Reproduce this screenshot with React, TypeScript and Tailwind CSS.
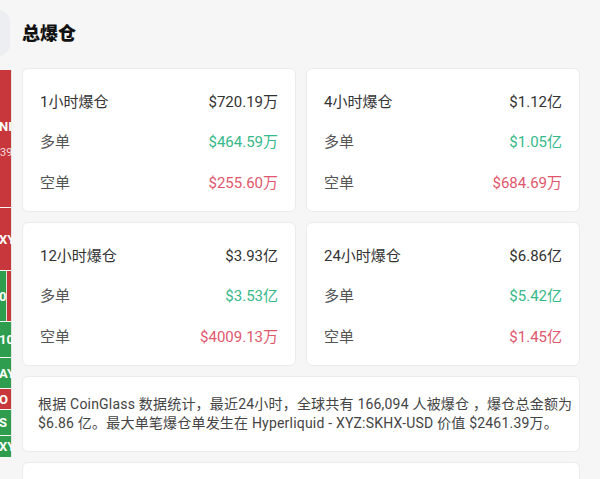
import React from "react";

const FONT = 'Roboto, "Noto Sans CJK SC", "Noto Sans", sans-serif';

interface IStat {
  title: string;
  total: string;
  long: string;
  short: string;
}

const stats: IStat[] = [
  { title: "1小时爆仓", total: "$720.19万", long: "$464.59万", short: "$255.60万" },
  { title: "4小时爆仓", total: "$1.12亿", long: "$1.05亿", short: "$684.69万" },
  { title: "12小时爆仓", total: "$3.93亿", long: "$3.53亿", short: "$4009.13万" },
  { title: "24小时爆仓", total: "$6.86亿", long: "$5.42亿", short: "$1.45亿" },
];

// right edge of the heatmap that sits beside the panel
const heatCells = [
  { h: "h-[137px]", color: "bg-[#c7373b]", text: "NI", sub: "39" },
  { h: "h-[62px]", color: "bg-[#c7373b]", text: "XY", sub: "" },
  { h: "h-[50px]", color: "bg-[#2f9d4e]", text: "0", sub: "", split: true },
  { h: "h-[35px]", color: "bg-[#2f9d4e]", text: "10", sub: "" },
  { h: "h-[30px]", color: "bg-[#2f9d4e]", text: "AY", sub: "" },
  { h: "h-[20px]", color: "bg-[#c7373b]", text: "O", sub: "" },
  { h: "h-[25px]", color: "bg-[#2f9d4e]", text: "S", sub: "" },
  { h: "h-[21px]", color: "bg-[#2f9d4e]", text: "XY", sub: "" },
];

function StatCard({ stat }: { stat: IStat }) {
  return (
    <div className="bg-white border border-[#ebebeb] rounded-md h-[144px] px-[17px] pt-[21px] flex flex-col">
      <div className="flex justify-between items-center h-[24px] text-[15px] text-[#333]">
        <span>{stat.title}</span>
        <span>{stat.total}</span>
      </div>
      <div className="flex justify-between items-center h-[24px] mt-[16px] text-[15px]">
        <span className="text-[#555]">多单</span>
        <span className="text-[#35b98a]">{stat.long}</span>
      </div>
      <div className="flex justify-between items-center h-[24px] mt-[17px] text-[15px]">
        <span className="text-[#555]">空单</span>
        <span className="text-[#e0576d]">{stat.short}</span>
      </div>
    </div>
  );
}

function HeatStrip() {
  return (
    <div className="w-[12px] shrink-0 overflow-hidden flex flex-col">
      <div className="h-[46px] mt-[10px] -ml-[30px] w-[40px] rounded-xl bg-[#eceef1]" />
      <div className="mt-[14px] flex flex-col gap-[1px] border-r border-[#e6e6e6]">
        {heatCells.map((cell, i) => (
          <div
            key={i}
            className={`${cell.h} ${cell.color} relative flex flex-col justify-center items-start text-white font-bold`}
          >
            {cell.split && (
              <div className="absolute top-0 right-0 h-full w-[5px] bg-[#c7373b] border-l border-[#d9e8d9]" />
            )}
            <span className="text-[13px] leading-none -ml-[1px]">{cell.text}</span>
            {cell.sub && (
              <span className="text-[11px] leading-none mt-[14px] font-normal opacity-80">{cell.sub}</span>
            )}
          </div>
        ))}
      </div>
    </div>
  );
}

export default function App() {
  return (
    <div
      className="w-[600px] h-[479px] overflow-hidden bg-[#f6f6f6] flex"
      style={{ fontFamily: FONT }}
    >
      <HeatStrip />
      <div className="ml-[10px] w-[558px] pt-[19px]">
        <h1 className="text-[18px] font-extrabold text-[#111] leading-[30px]">总爆仓</h1>
        <div className="grid grid-cols-2 gap-x-[10px] gap-y-[10px] mt-[19px]">
          {stats.map((stat) => (
            <StatCard key={stat.title} stat={stat} />
          ))}
        </div>
        <div className="mt-[10px] bg-white border border-[#ebebeb] rounded-md h-[76px] px-[15px] pt-[18px] text-[14px] tracking-[0.2px] leading-[19px] text-[#444] whitespace-nowrap">
          根据 CoinGlass 数据统计，最近24小时，全球共有 166,094 人被爆仓 ，爆仓总金额为
          <br />
          $6.86 亿。最大单笔爆仓单发生在 Hyperliquid - XYZ:SKHX-USD 价值 $2461.39万。
        </div>
        <div className="mt-[10px] bg-white border border-[#ebebeb] rounded-md h-[60px]" />
      </div>
    </div>
  );
}
